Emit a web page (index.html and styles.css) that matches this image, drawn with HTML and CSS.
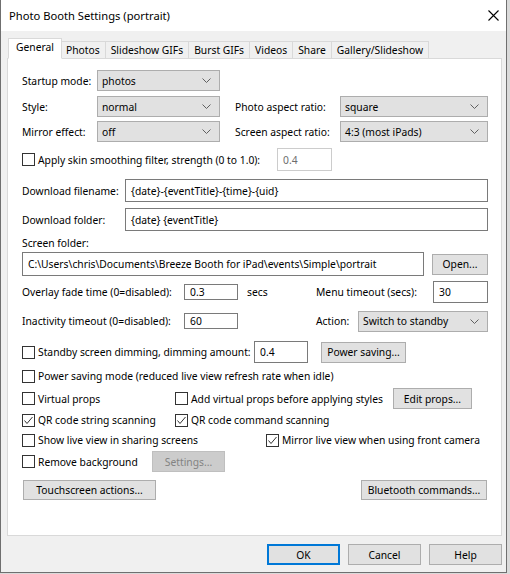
FILE: index.html
```html
<!DOCTYPE html>
<html>
<head>
<meta charset="utf-8">
<link rel="stylesheet" href="styles.css">
</head>
<body>
<div class="window">
  <div class="titlebar">
    <span class="title">Photo Booth Settings (portrait)</span>
    <svg class="close" width="11" height="11" viewBox="0 0 11 11"><path d="M0.5 0.5 L10.5 10.5 M10.5 0.5 L0.5 10.5" stroke="#000" stroke-width="1.1" fill="none"/></svg>
  </div>
  <div class="client">
    <div class="tabs">
      <div class="tab active">General</div>
      <div class="tab">Photos</div>
      <div class="tab">Slideshow GIFs</div>
      <div class="tab">Burst GIFs</div>
      <div class="tab">Videos</div>
      <div class="tab">Share</div>
      <div class="tab">Gallery/Slideshow</div>
    </div>
    <div class="panel">
      <div class="row h21">
        <span class="lbl w75">Startup mode:</span>
        <div class="select w123"><span>photos</span><svg class="chev" width="9" height="5" viewBox="0 0 9 5"><path d="M0.5 0.5 L4.5 4.5 L8.5 0.5" stroke="#606060" fill="none"/></svg></div>
      </div>
      <div class="row h21 mt5">
        <span class="lbl w75">Style:</span>
        <div class="select w123"><span>normal</span><svg class="chev" width="9" height="5" viewBox="0 0 9 5"><path d="M0.5 0.5 L4.5 4.5 L8.5 0.5" stroke="#606060" fill="none"/></svg></div>
        <span class="lbl w105 ml15">Photo aspect ratio:</span>
        <div class="select w148"><span>square</span><svg class="chev" width="9" height="5" viewBox="0 0 9 5"><path d="M0.5 0.5 L4.5 4.5 L8.5 0.5" stroke="#606060" fill="none"/></svg></div>
      </div>
      <div class="row h21 mt4">
        <span class="lbl w75">Mirror effect:</span>
        <div class="select w123"><span>off</span><svg class="chev" width="9" height="5" viewBox="0 0 9 5"><path d="M0.5 0.5 L4.5 4.5 L8.5 0.5" stroke="#606060" fill="none"/></svg></div>
        <span class="lbl w105 ml15">Screen aspect ratio:</span>
        <div class="select w148"><span>4:3 (most iPads)</span><svg class="chev" width="9" height="5" viewBox="0 0 9 5"><path d="M0.5 0.5 L4.5 4.5 L8.5 0.5" stroke="#606060" fill="none"/></svg></div>
      </div>
      <div class="row h23 mt6">
        <span class="check"></span><span class="ctext w239">Apply skin smoothing filter, strength (0 to 1.0):</span>
        <div class="field w55 disabled">0.4</div>
      </div>
      <div class="row h23 mt8">
        <span class="lbl w103">Download filename:</span>
        <div class="field grow">{date}-{eventTitle}-{time}-{uid}</div>
      </div>
      <div class="row h23 mt6">
        <span class="lbl w103">Download folder:</span>
        <div class="field grow">{date} {eventTitle}</div>
      </div>
      <div class="row h15 mt4">
        <span class="lbl">Screen folder:</span>
      </div>
      <div class="row h24 mt2">
        <div class="field grow">C:\Users\chris\Documents\Breeze Booth for iPad\events\Simple\portrait</div>
        <div class="btn w56 ml8">Open...</div>
      </div>
      <div class="row h22 mt5">
        <div class="group w294">
          <span class="lbl w162">Overlay fade time (0=disabled):</span>
          <div class="field w54">0.3</div>
          <span class="ml9">secs</span>
        </div>
        <span class="lbl w117">Menu timeout (secs):</span>
        <div class="field grow">30</div>
      </div>
      <div class="row h22 mt7">
        <div class="group w294">
          <span class="lbl w162">Inactivity timeout (0=disabled):</span>
          <div class="field w54">60</div>
        </div>
        <span class="lbl w42">Action:</span>
        <div class="select grow"><span>Switch to standby</span><svg class="chev" width="9" height="5" viewBox="0 0 9 5"><path d="M0.5 0.5 L4.5 4.5 L8.5 0.5" stroke="#606060" fill="none"/></svg></div>
      </div>
      <div class="row h22 mt9">
        <span class="check"></span><span class="ctext w216">Standby screen dimming, dimming amount:</span>
        <div class="field w54">0.4</div>
        <div class="btn w85 ml13">Power saving...</div>
      </div>
      <div class="row h20 mt3">
        <span class="check"></span><span class="ctext">Power saving mode (reduced live view refresh rate when idle)</span>
      </div>
      <div class="row h21 mt2">
        <div class="group w153"><span class="check"></span><span class="ctext">Virtual props</span></div>
        <div class="group w218"><span class="check"></span><span class="ctext">Add virtual props before applying styles</span></div>
        <div class="btn w79">Edit props...</div>
      </div>
      <div class="row h20 mt1">
        <div class="group w153"><span class="check on"><svg width="11" height="11" viewBox="0 0 11 11"><path d="M1.5 5.5 L4 8.5 L9.5 2" stroke="#333" stroke-width="1" fill="none"/></svg></span><span class="ctext">QR code string scanning</span></div>
        <div class="group"><span class="check on"><svg width="11" height="11" viewBox="0 0 11 11"><path d="M1.5 5.5 L4 8.5 L9.5 2" stroke="#333" stroke-width="1" fill="none"/></svg></span><span class="ctext">QR code command scanning</span></div>
      </div>
      <div class="row h20">
        <div class="group w244"><span class="check"></span><span class="ctext">Show live view in sharing screens</span></div>
        <div class="group"><span class="check on"><svg width="11" height="11" viewBox="0 0 11 11"><path d="M1.5 5.5 L4 8.5 L9.5 2" stroke="#333" stroke-width="1" fill="none"/></svg></span><span class="ctext">Mirror live view when using front camera</span></div>
      </div>
      <div class="row h21 mt1">
        <div class="group w130"><span class="check"></span><span class="ctext">Remove background</span></div>
        <div class="btn w73 disabled">Settings...</div>
      </div>
      <div class="row h20 mt8 between">
        <div class="btn w133 ml1">Touchscreen actions...</div>
        <div class="btn w126 mr1">Bluetooth commands...</div>
      </div>
    </div>
    <div class="footer">
      <div class="btn dlg default">OK</div>
      <div class="btn dlg">Cancel</div>
      <div class="btn dlg">Help</div>
    </div>
  </div>
</div>
</body>
</html>
```
FILE: styles.css
```css
html, body {
  margin: 0;
  padding: 0;
}
body {
  background: #dadada;
  font-family: "Noto Sans", sans-serif;
  font-size: 10.3px;
  color: #000;
  width: 510px;
  height: 574px;
  overflow: hidden;
}
.window {
  box-sizing: border-box;
  width: 507px;
  height: 573px;
  border: 1px solid #6f6f6f;
  border-top: 0;
  background: #f0f0f0;
  display: flex;
  flex-direction: column;
}
.titlebar {
  height: 31px;
  flex: none;
  background: #fff;
  display: flex;
  align-items: center;
  padding-left: 8px;
  padding-right: 7px;
}
.title {
  font-size: 11.2px;
  margin-top: -1px;
}
.close {
  margin-left: auto;
  margin-top: -1px;
}
.client {
  flex: 1;
  display: flex;
  flex-direction: column;
  padding: 7px 4px 0 6px;
}
.tabs {
  display: flex;
  align-items: flex-end;
  height: 21px;
  margin-left: 1px;
  margin-bottom: -1px;
  position: relative;
  z-index: 1;
}
.tab {
  box-sizing: border-box;
  height: 18px;
  border: 1px solid #d9d9d9;
  margin-left: -1px;
  background: #f0f0f0;
  padding: 0 5px;
  line-height: 16px;
  white-space: nowrap;
}
.tab:first-child {
  margin-left: 0;
}
.tab.active {
  height: 21px;
  background: #fff;
  border-bottom: 1px solid #fff;
  padding: 0 7px;
  line-height: 17px;
  position: relative;
  z-index: 2;
}
.tab.active + .tab {
  border-left: 0;
}
.panel {
  box-sizing: border-box;
  height: 478px;
  border: 1px solid #d9d9d9;
  background: #fff;
  padding: 11px 13px 0 14px;
  display: flex;
  flex-direction: column;
}
.row {
  display: flex;
  align-items: center;
  flex: none;
  white-space: nowrap;
}
.between { justify-content: space-between; }
.group {
  display: flex;
  align-items: center;
  flex: none;
}
.h15 { height: 15px; }
.h20 { height: 20px; }
.h21 { height: 21px; }
.h22 { height: 22px; }
.h23 { height: 23px; }
.h24 { height: 24px; }
.mt1 { margin-top: 1px; }
.mt2 { margin-top: 2px; }
.mt3 { margin-top: 3px; }
.mt4 { margin-top: 4px; }
.mt5 { margin-top: 5px; }
.mt6 { margin-top: 6px; }
.mt7 { margin-top: 7px; }
.mt8 { margin-top: 8px; }
.mt9 { margin-top: 9px; }
.ml1 { margin-left: 1px; }
.mr1 { margin-right: 1px; }
.ml8 { margin-left: 8px; }
.ml9 { margin-left: 9px; }
.ml13 { margin-left: 13px; }
.ml15 { margin-left: 15px; }
.w42 { width: 42px; }
.w54 { width: 54px; }
.w55 { width: 55px; }
.w56 { width: 56px; }
.w73 { width: 73px; }
.w75 { width: 75px; }
.w79 { width: 79px; }
.w85 { width: 85px; }
.w103 { width: 103px; }
.w105 { width: 105px; }
.w117 { width: 117px; }
.w123 { width: 123px; }
.w126 { width: 126px; }
.w130 { width: 130px; }
.w133 { width: 133px; }
.w148 { width: 148px; }
.w153 { width: 153px; }
.w162 { width: 162px; }
.w216 { width: 216px; }
.w218 { width: 218px; }
.w239 { width: 239px; }
.w244 { width: 244px; }
.w294 { width: 294px; }
.grow { flex: 1; min-width: 0; }
.lbl {
  flex: none;
  display: block;
}
.select {
  box-sizing: border-box;
  height: 21px;
  background: #e1e1e1;
  border: 1px solid #adadad;
  display: flex;
  align-items: center;
  padding: 0 0 0 4px;
  flex: none;
}
.select.grow { flex: 1; }
.select .chev {
  margin-left: auto;
  margin-right: 8px;
}
.field {
  box-sizing: border-box;
  height: 100%;
  border: 1px solid #7a7a7a;
  background: #fff;
  padding: 0 5px;
  display: flex;
  align-items: center;
  overflow: hidden;
  flex: none;
}
.field.grow { flex: 1; }
.field.disabled {
  border-color: #cccccc;
  color: #6d6d6d;
}
.check {
  box-sizing: border-box;
  width: 13px;
  height: 13px;
  border: 1px solid #333;
  background: #fff;
  flex: none;
  display: flex;
  align-items: center;
  justify-content: center;
}
.ctext {
  margin-left: 3px;
  flex: none;
}
.btn {
  box-sizing: border-box;
  height: 21px;
  background: #e1e1e1;
  border: 1px solid #adadad;
  display: flex;
  align-items: center;
  justify-content: center;
  flex: none;
}
.row.h20 .btn { height: 20px; }
.btn.disabled {
  background: #cccccc;
  border-color: #bfbfbf;
  color: #838383;
}
.footer {
  display: flex;
  justify-content: flex-end;
  gap: 8px;
  margin-top: 8px;
}
.btn.dlg {
  width: 73px;
  height: 21px;
}
.btn.default {
  border: 2px solid #0078d7;
}
```
